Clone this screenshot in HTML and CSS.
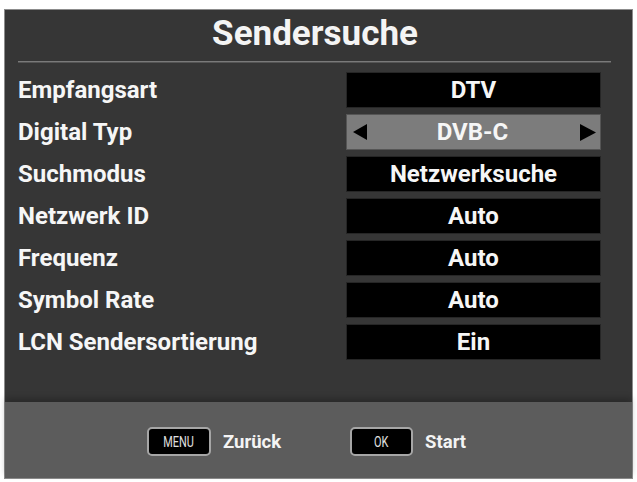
FILE: index.html
```html
<!DOCTYPE html>
<html lang="de">
<head>
<meta charset="utf-8">
<title>Sendersuche</title>
<link rel="stylesheet" href="styles.css">
</head>
<body>
<div class="screen">
  <h1 class="title">Sendersuche</h1>
  <div class="divider"></div>
  <div class="rows">
    <div class="row"><span class="label">Empfangsart</span><span class="value">DTV</span></div>
    <div class="row"><span class="label">Digital Typ</span><span class="value selected"><svg class="arrow" width="14" height="16" viewBox="0 0 14 16"><polygon points="0,8 14,0 14,16" fill="#000"/></svg><span class="value-text">DVB-C</span><svg class="arrow" width="16" height="17" viewBox="0 0 16 17"><polygon points="0,0 16,8.5 0,17" fill="#000"/></svg></span></div>
    <div class="row"><span class="label">Suchmodus</span><span class="value">Netzwerksuche</span></div>
    <div class="row"><span class="label">Netzwerk ID</span><span class="value">Auto</span></div>
    <div class="row"><span class="label">Frequenz</span><span class="value">Auto</span></div>
    <div class="row"><span class="label">Symbol Rate</span><span class="value">Auto</span></div>
    <div class="row"><span class="label">LCN Sendersortierung</span><span class="value">Ein</span></div>
  </div>
  <div class="footer">
    <span class="key"><span class="key-text">MENU</span></span>
    <span class="hint">Zurück</span>
    <span class="key key-ok"><span class="key-text">OK</span></span>
    <span class="hint">Start</span>
  </div>
</div>
</body>
</html>
```

FILE: styles.css
```css
html, body {
  margin: 0;
  padding: 0;
  background: #ffffff;
}

body {
  width: 637px;
  height: 482px;
  overflow: hidden;
  font-family: Roboto, "Liberation Sans", sans-serif;
  color: #ffffff;
}

.screen {
  box-sizing: border-box;
  margin: 9px 4px 0 4px;
  width: 629px;
  height: 470px;
  border: 1px solid #8c8c8c;
  background: #363636;
  display: flex;
  flex-direction: column;
}

.title {
  margin: 0;
  height: 47px;
  line-height: 47px;
  text-align: center;
  font-size: 35px;
  font-weight: 700;
  padding-right: 7px;
  color: #f4f4f4;
}

.divider {
  height: 1px;
  background: #7a7a7a;
  margin: 4px 21px 0 13px;
  border-bottom: 1px solid #555;
}

.rows {
  flex: 1;
  display: flex;
  flex-direction: column;
  gap: 8px;
  padding: 10px 32px 0 13px;
}

.row {
  display: grid;
  grid-template-columns: 1fr 253px;
  height: 34px;
  align-items: center;
}

.label {
  font-size: 24px;
  font-weight: 700;
  line-height: 34px;
  color: #f6f6f6;
}

.value {
  height: 34px;
  line-height: 34px;
  background: #000;
  text-align: center;
  font-size: 24px;
  font-weight: 700;
  color: #f6f6f6;
  box-shadow: 0 0 0 1px #262626;
}

.value.selected {
  background: #7c7c7c;
  box-shadow: 0 0 0 1px #555;
  display: flex;
  align-items: center;
  padding: 0 4px 0 6px;
}

.value-text {
  flex: 1;
  text-align: center;
  padding-right: 2px;
}

.arrow {
  display: block;
}

.footer {
  height: 76px;
  background: #5c5c5c;
  box-shadow: 0 -4px 6px rgba(0, 0, 0, 0.22);
  display: flex;
  align-items: center;
  padding: 3px 0 0 142px;
  box-sizing: border-box;
}

.key {
  box-sizing: border-box;
  width: 64px;
  height: 29px;
  border: 2px solid #a6a6a6;
  border-radius: 5px;
  background: #000;
  display: flex;
  align-items: center;
  justify-content: center;
  margin-right: 12px;
}

.key-ok {
  width: 63px;
}

.key-text {
  display: inline-block;
  font-size: 14px;
  font-weight: 400;
  color: #e0e0e0;
  transform: scaleX(0.78);
}

.hint {
  font-size: 18.5px;
  font-weight: 700;
  color: #f4f4f4;
  margin-right: 69px;
}
```
